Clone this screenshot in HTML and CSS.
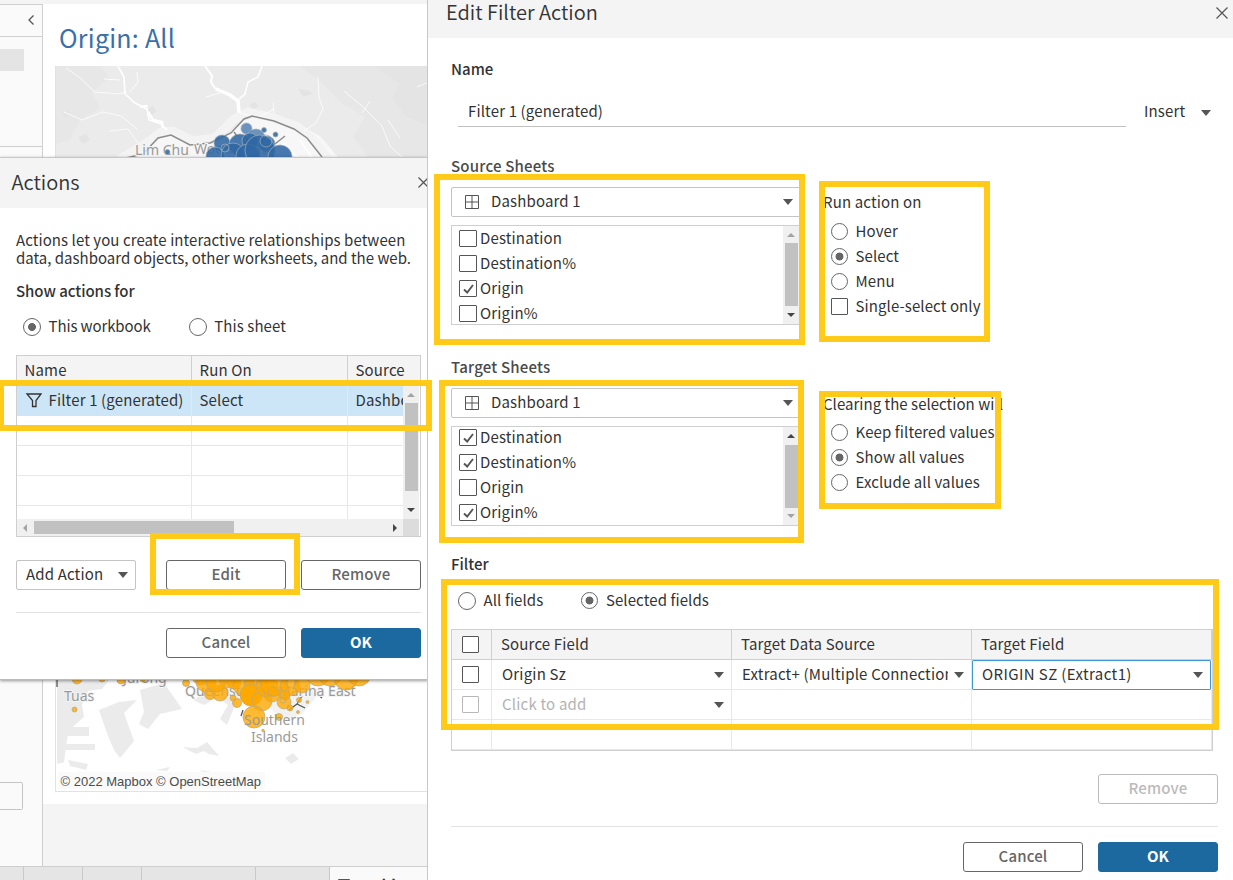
FILE: index.html
```html
<!DOCTYPE html>
<html lang="en">
<head>
<meta charset="utf-8">
<title>Edit Filter Action</title>
<link rel="stylesheet" href="styles.css">
</head>
<body>
<div class="desktop">
  <div class="workbook">
    <div class="topstrip"></div>
    <div class="work">
      <aside class="side">
        <div class="side-head"><svg width="8" height="12" viewBox="0 0 8 12"><path d="M6.500 1.500 2 6l4.500 4.500" fill="none" stroke="#555" stroke-width="1.300"/></svg></div>
        <div class="side-top"><div class="side-chip"></div></div>
        <div class="side-rest"><div class="side-field"></div></div>
      </aside>
      <main class="canvas">
        <div class="sheet">
          <h1 class="sheet-title">Origin: All</h1>
          <svg class="map" width="373" height="726" viewBox="55 66 373 726">
            <rect x="55" y="66" width="373" height="726" fill="#fff"/>
            <rect x="55" y="66" width="373" height="140" fill="#ebebeb"/>
            <g fill="#e4e4e4">
              <path d="M55 66h45l10 12-18 14 8 16-20 12-10 20-15 4z" opacity=".6"/>
              <path d="M300 66h128v91h-60l-15-20 12-20-25-15-22-22z" opacity=".6"/>
              <path d="M375 66h53v60l-22-10-14-18 8-14z"/>
              <path d="M298 89l10 1 5 4-10 3zM62 113l6-3 3 4-6 3zM148 109l5-3 3 5-4 4zM78 137l8-3 4 6-7 4zM250 104l6-2 2 5-7 2z"/>
            </g>
            <path d="M100 172l35-22 20-14 16-1 20 10 25-1 28-24 20-4 34 8 22 12 34 40z" fill="#f7f7f7"/>
            <path d="M120 159l28-17 13-10 12-1 20 10 22-3 18-18 15-8 26 6 24 9 16 14 14 18" fill="none" stroke="#f3f3f3" stroke-width="9"/>
            <g fill="none" stroke="#fff">
              <path d="M118 66l6 11 1 17 10 9 12 6 2 11 12 4 6 6" stroke-width="1.600"/>
              <path d="M140 107l8-1M148 112l5 8 9 2 1 6" stroke-width="2.500"/>
              <path d="M205 66l7 10-1 6 4 6 12 6 11 6 1 12" stroke-width="2"/>
              <path d="M216 89l14 6 8 6 1 12" stroke-width="3.500"/>
              <path d="M262 66l-4 11-10 5-3 12-6 5" stroke-width="1.500"/>
              <g stroke-opacity=".75"><path d="M66 68l13 9 16 15 24 2 8-2M64 112l18 8 21-8 18 4 16 13M109 131l19-2 10 14M104 79l16 1M137 72l1 10-8 10M220 93l-14 4M318 77l1 20 4 12-7 14-12 8M344 91l18 15 20 20 8 20 12 11M370 101l-8 12M388 120l12 18M417 87l12-5M240 113l18 5 16-9M273 103l1 10"/></g>
              <path d="M290 150l8 8M300 140l12 18M285 143l-8 9" stroke-width="2"/>
            </g>
            <path d="M126 158l17-4 15-16 13-3 19 10 20-2 21-10 13-14 8-3 22 5 20 8 13 9 15 19M275 144l10-8M234 132l3 4" fill="none" stroke="#8c8c8c" stroke-width="1.500"/>
            <g class="place"><text x="135" y="155">Lim Chu</text><text x="194" y="154">Woodlands</text></g>
            <g fill="#2f68a4" stroke="#a5adb5" stroke-width=".7" fill-opacity=".88">
              <circle cx="246.500" cy="128.500" r="5.500" fill-opacity=".7"/><circle cx="264" cy="130" r="2.500"/><circle cx="275.500" cy="134.500" r="2.500"/><circle cx="167.500" cy="152" r="2.500"/>
              <circle cx="256" cy="138" r="9" fill-opacity=".7"/><circle cx="222" cy="143" r="8"/><circle cx="240" cy="145" r="11"/><circle cx="250" cy="141" r="8"/><circle cx="267" cy="144" r="8"/><circle cx="215" cy="156" r="9"/><circle cx="233" cy="155" r="12"/><circle cx="248" cy="156" r="12"/><circle cx="260" cy="150" r="15"/><circle cx="280" cy="157" r="12"/><circle cx="225" cy="148" r="4" fill="none"/><circle cx="266" cy="141" r="6" fill="none"/>
            </g>
            <g fill="#ebebeb">
              <path d="M57 680h52l-7 9-14 2-6 14 2 12-15 13-2 10-3 22-7 2zM60 727h29v9H60zM60 744h35v6H60zM68 760l20 4-2 6-16-4z"/>
              <path d="M57 726h6v37h-6z"/>
              <path d="M99 710l20-8 18-2-13 13 10 28-14 17-6-8-6-14zM140 690l24-7 18 26-22 5-12 15-9-5 5-12z"/>
              <path d="M193 700l26-14 38 10 4 6-24-2-10 25-7-6 8-14-10-8-14 8z"/>
              <path d="M183 747l14 1 10-6 12 14-10-2-5-3-8 3-8-4zM285 758l8-5 6 6-8 5zM301 754v5M155 770l15-3-3 4zM200 770l12 2h-9z"/>
              <path d="M250 688l45-2 28 3-20 24-15 8-14-9z" fill="#f2f2f2"/>
            </g>
            <path d="M57 680v7M289 710l8-6m0 0 8 4m-8-4 5-8M318 695l4 3M243 710l-2 6" fill="none" stroke="#555" stroke-width="1.300"/>
            <g class="place"><text x="64" y="701">Tuas</text><text x="123" y="683">Jurong</text><text x="185" y="696">Queenstown</text><text x="278" y="696">Marina East</text></g>
            <g fill="#ffa800" stroke="#b8a77c" stroke-width=".7" fill-opacity=".8">
              <circle cx="74.500" cy="709.500" r="2.500"/><circle cx="77" cy="679" r="5"/><circle cx="102" cy="679" r="3"/><circle cx="121" cy="680" r="4"/><circle cx="143" cy="679" r="3"/>
              <circle cx="186" cy="683" r="3.500"/><circle cx="201" cy="676" r="9"/><circle cx="206" cy="682" r="10"/><circle cx="210" cy="694" r="5.500"/><circle cx="220" cy="693" r="8"/><circle cx="216" cy="682" r="10"/><circle cx="229" cy="678" r="10"/><circle cx="234" cy="682" r="7"/><circle cx="233" cy="698" r="3"/><circle cx="237" cy="703" r="4.500"/><circle cx="244" cy="685" r="11"/><circle cx="256" cy="684" r="12"/><circle cx="251" cy="695" r="11" fill-opacity="1"/><circle cx="262" cy="701" r="10"/><circle cx="267" cy="686" r="11"/><circle cx="254" cy="717" r="11"/><circle cx="272" cy="694" r="8"/><circle cx="274" cy="682" r="14"/><circle cx="284" cy="702" r="7"/><circle cx="290" cy="686" r="10"/><circle cx="290" cy="708" r="3"/><circle cx="299" cy="700" r="2.500"/><circle cx="302" cy="685" r="8"/><circle cx="307.500" cy="702" r="1.500"/><circle cx="298" cy="712" r="1.500"/><circle cx="279" cy="717" r="3.500"/><circle cx="263" cy="730.500" r="1.300"/>
              <circle cx="318" cy="674" r="12"/><circle cx="330" cy="674" r="12"/><circle cx="346" cy="678" r="12"/><circle cx="359" cy="674" r="12"/>
              <circle cx="273" cy="692" r="5" fill="none"/><circle cx="285" cy="695" r="5"/><circle cx="291" cy="683" r="5" fill="none"/><circle cx="283" cy="700" r="3" fill="none"/>
            </g>
            <g class="place bare"><text x="244" y="725">Southern</text><text x="251" y="742">Islands</text></g>
            <rect x="58" y="772" width="207" height="17" fill="#fafafa"/>
            <text class="credit" x="60.500" y="786">© 2022 Mapbox © OpenStreetMap</text>
            <path d="M55.500 66v725.500H428" fill="none" stroke="#e2e2e2"/>
          </svg>
        </div>
      </main>
    </div>
    <div class="tabs"><i class="tab t1"></i><i class="tab t2"></i><i class="tab t3"></i><i class="tab t4"></i><i class="tab t5"></i><div class="tab-active"><svg width="12" height="10" viewBox="0 0 12 10"><path d="M.5.5h11v9H.500zM6 0v10M0 5h12" fill="none" stroke="#555"/></svg>Dashboard 1</div></div>
  </div>

  <section class="dialog actions">
    <header class="a-head"><h2 class="a-title">Actions</h2><svg class="x" width="11" height="11" viewBox="0 0 11 11"><path d="M.5.5l10 10M10.500.500l-10 10" stroke="#555" stroke-width="1.200"/></svg></header>
    <div class="a-body">
      <p class="intro">Actions let you create interactive relationships between<br><span class="in2">data, dashboard objects, other worksheets, and the web.</span></p>
      <div class="strong show-for">Show actions for</div>
      <div class="a-radios"><span class="opt wb"><i class="radio big on"></i>This workbook</span><span class="opt"><i class="radio big"></i>This sheet</span></div>
      <div class="a-table">
        <div class="a-row a-th"><span>Name</span><span>Run On</span><span>Source</span></div>
        <div class="a-main">
          <div class="a-rows">
            <div class="a-row sel"><span class="fname"><svg width="17" height="15" viewBox="0 0 17 15"><path d="M2 1h14L11 7.500v6H7.500v-6z" fill="none" stroke="#333" stroke-width="1.300"/></svg>Filter 1 (generated)</span><span>Select</span><span>Dashboard</span></div>
            <div class="a-row"><span></span><span></span><span></span></div>
            <div class="a-row"><span></span><span></span><span></span></div>
            <div class="a-row"><span></span><span></span><span></span></div>
            <div class="a-row"><span></span><span></span><span></span></div>
          </div>
          <div class="vbar av"><i class="up dim"></i><i class="thumb"></i><i class="down"></i></div>
        </div>
        <div class="a-foot"><div class="hbar"><i class="left dim"></i><i class="hthumb"></i><i class="right"></i></div><i class="corner"></i></div>
      </div>
      <div class="a-buttons"><div class="btn add">Add Action<i class="caret"></i></div><div class="btn edit">Edit</div><div class="btn">Remove</div></div>
      <div class="a-final"><div class="btn">Cancel</div><div class="btn primary">OK</div></div>
    </div>
  </section>

  <section class="dialog editor">
    <header class="e-head"><h2 class="e-title">Edit Filter Action</h2><svg class="x" width="12" height="12" viewBox="0 0 12 12"><path d="M.5.5l11 11M11.500.500l-11 11" stroke="#555" stroke-width="1.200"/></svg></header>
    <div class="e-body">
      <div class="strong name-label">Name</div>
      <div class="name-row"><div class="name-input">Filter 1 (generated)</div><div class="insert">Insert<i class="caret"></i></div></div>
      <div class="pair">
        <div class="sheets">
          <div class="semi">Source Sheets</div>
          <div class="select"><svg width="14" height="14" viewBox="0 0 14 14"><path d="M.5.5h13v13H.500zM7 0v14M0 7h14" fill="none" stroke="#555"/></svg><span>Dashboard 1</span><i class="caret"></i></div>
          <div class="list">
            <div class="items">
              <div class="item"><i class="check"></i>Destination</div>
              <div class="item"><i class="check"></i>Destination%</div>
              <div class="item"><i class="check"><svg width="16" height="15" viewBox="0 0 16 15"><path d="M4 8.500l3.200 3L13 4" fill="none" stroke="#555" stroke-width="1.900"/></svg></i>Origin</div>
              <div class="item"><i class="check"></i>Origin%</div>
            </div>
            <div class="vbar"><i class="up dim"></i><i class="thumb"></i><i class="down"></i></div>
          </div>
        </div>
        <div class="options">
          <div class="cap run">Run action on</div>
          <div class="opt"><i class="radio"></i>Hover</div>
          <div class="opt"><i class="radio on"></i>Select</div>
          <div class="opt"><i class="radio"></i>Menu</div>
          <div class="opt"><i class="box"></i>Single-select only</div>
        </div>
      </div>
      <div class="pair second">
        <div class="sheets">
          <div class="semi">Target Sheets</div>
          <div class="select"><svg width="14" height="14" viewBox="0 0 14 14"><path d="M.5.5h13v13H.500zM7 0v14M0 7h14" fill="none" stroke="#555"/></svg><span>Dashboard 1</span><i class="caret"></i></div>
          <div class="list scrolled">
            <div class="items">
              <div class="item"><i class="check"><svg width="16" height="15" viewBox="0 0 16 15"><path d="M4 8.500l3.200 3L13 4" fill="none" stroke="#555" stroke-width="1.900"/></svg></i>Destination</div>
              <div class="item"><i class="check"><svg width="16" height="15" viewBox="0 0 16 15"><path d="M4 8.500l3.200 3L13 4" fill="none" stroke="#555" stroke-width="1.900"/></svg></i>Destination%</div>
              <div class="item"><i class="check"></i>Origin</div>
              <div class="item"><i class="check"><svg width="16" height="15" viewBox="0 0 16 15"><path d="M4 8.500l3.200 3L13 4" fill="none" stroke="#555" stroke-width="1.900"/></svg></i>Origin%</div>
            </div>
            <div class="vbar"><i class="up"></i><i class="thumb"></i><i class="down dim"></i></div>
          </div>
        </div>
        <div class="options">
          <div class="cap clearing">Clearing the selection will</div>
          <div class="opt"><i class="radio"></i>Keep filtered values</div>
          <div class="opt"><i class="radio on"></i>Show all values</div>
          <div class="opt"><i class="radio"></i>Exclude all values</div>
        </div>
      </div>
      <div class="strong filter-label">Filter</div>
      <div class="f-radios"><span class="opt"><i class="radio big"></i>All fields</span><span class="opt"><i class="radio on"></i>Selected fields</span></div>
      <div class="grid">
        <div class="g-row g-head"><span><i class="box"></i></span><span>Source Field</span><span>Target Data Source</span><span>Target Field</span></div>
        <div class="g-row"><span><i class="box"></i></span><span class="drop"><b>Origin Sz</b><i class="caret"></i></span><span class="drop tight"><b>Extract+ (Multiple Connections)</b><i class="caret"></i></span><span class="drop focus"><b>ORIGIN SZ (Extract1)</b><i class="caret"></i></span></div>
        <div class="g-row"><span><i class="box faint"></i></span><span class="drop muted"><b>Click to add</b><i class="caret"></i></span><span></span><span></span></div>
        <div class="g-row"><span></span><span></span><span></span><span></span></div>
      </div>
      <div class="e-remove"><div class="btn off">Remove</div></div>
      <div class="e-final"><div class="btn">Cancel</div><div class="btn primary">OK</div></div>
    </div>
  </section>

  <div class="mark m-row"></div>
  <div class="mark m-edit"></div>
  <div class="mark m-source"></div>
  <div class="mark m-target"></div>
  <div class="mark m-run"></div>
  <div class="mark m-clear"></div>
  <div class="mark m-filter"></div>
</div>
</body>
</html>
```
FILE: styles.css
```css
* { box-sizing: border-box; }
body { margin: 0; font-family: "Noto Sans CJK SC", "Noto Sans", sans-serif; font-size: 15px; line-height: 20px; color: #333; letter-spacing: .15px; }
h1, h2, p { margin: 0; font-weight: 400; }
i { font-style: normal; display: block; flex: none; }
b { font-weight: 400; }
svg { display: block; flex: none; }
.desktop { position: relative; width: 1233px; height: 880px; overflow: hidden; background: #fff; }

/* workbook behind the dialogs */
.workbook { width: 428px; height: 880px; display: flex; flex-direction: column; overflow: hidden; }
.topstrip { height: 4px; background: #f4f4f4; flex: none; }
.work { display: flex; height: 862px; flex: none; }
.side { width: 43px; border-right: 1px solid #cfcfcf; border-top: 1px solid #cfcfcf; background: #fafafa; flex: none; }
.side-head { height: 32px; border-bottom: 1px solid #cfcfcf; padding: 9px 7px; display: flex; justify-content: flex-end; }
.side-top { height: 110px; border-bottom: 1px solid #cfcfcf; padding-top: 12px; }
.side-chip { width: 24px; height: 22px; background: #e4e4e4; }
.side-rest { padding-top: 635px; }
.side-field { width: 23px; height: 28px; border: 1px solid #c4c4c4; border-left: 0; border-radius: 0 2px 2px 0; }
.canvas { flex: 1; background: #f4f4f4; }
.sheet { height: 800px; background: #fff; padding-left: 12px; }
.sheet-title { height: 62px; padding: 16px 0 0 4px; font-size: 25px; line-height: 34px; color: #3a6fa9; letter-spacing: .25px; }
.place { font: 14px "Noto Sans", sans-serif; fill: #9a9a9a; stroke: #f4f4f4; stroke-width: 2px; paint-order: stroke; letter-spacing: 0; }
.bare { stroke: none; }
.credit { font: 13px "Liberation Sans", sans-serif; fill: #4c4c4c; letter-spacing: 0; }
.tabs { height: 14px; display: flex; background: #e5e5e5; border-top: 1px solid #cfcfcf; }
.tab { border-right: 1px solid #c8c8c8; }
.t1 { width: 24px; } .t2, .t3 { width: 59px; } .t4 { width: 114px; } .t5 { width: 74px; }
.tab-active { flex: 1; display: flex; align-items: flex-start; gap: 4px; background: #fafafa; padding: 12px 0 0 8px; font-weight: 700; line-height: 12px; height: 13px; overflow: hidden; }

/* shared controls */
.dialog { position: absolute; background: #fff; }
.strong { font-weight: 500; color: #333; letter-spacing: 0; }
.semi { font-weight: 500; color: #4a4a4a; letter-spacing: .2px; }
.opt { display: flex; align-items: center; gap: 7.500px; height: 25px; padding-bottom: 2px; white-space: nowrap; letter-spacing: .1px; }
.wb { letter-spacing: -.1px; }
.radio { width: 17px; height: 17px; border: 1px solid #666; border-radius: 50%; background: #fff; margin-top: 2px; }
.radio.big { width: 18px; height: 18px; }
.radio.on { background: radial-gradient(circle, #666 0 3.600px, #fff 4.300px); }
.box { width: 17px; height: 17px; border: 1px solid #555; border-radius: 1px; background: #fff; }
.opt .box { margin-top: 2px; }
.caret { width: 0; height: 0; border: 5px solid transparent; border-top: 6px solid #555; border-bottom: 0; }
.btn { width: 120px; height: 30px; border: 1px solid #666; border-radius: 3px; background: #fff; color: #666; text-align: center; line-height: 26px; font-weight: 500; }
.primary { background: #1b699f; border-color: #1b699f; color: #fff; font-weight: 700; }
.off { border-color: #bbb; color: #bbb; }
.vbar { width: 16px; display: flex; flex-direction: column; align-items: center; background: #f0f0f0; flex: none; }
.up, .down { width: 0; height: 0; border: 4px solid transparent; }
.up { border-top: 0; border-bottom-color: #444; margin-top: 7px; }
.down { border-bottom: 0; border-top-color: #444; margin-top: 7px; }
.up.dim { border-bottom-color: #a3a3a3; }
.down.dim { border-top-color: #a3a3a3; }
.thumb { width: 13px; height: 63px; background: #c1c1c1; margin-top: 6px; }

/* actions window */
.actions { left: 0; top: 157px; width: 428px; height: 523px; border-top: 1px solid #c8c8c8; border-bottom: 1px solid #bbb; box-shadow: 0 1px 3px #0006; }
.a-head { height: 50px; background: #f4f4f4; display: flex; justify-content: space-between; align-items: center; padding: 0 0 2px 11.500px; }
.a-head .x { margin-right: -1px; }
.a-title, .e-title { font-size: 20px; line-height: 28px; letter-spacing: 0; font-weight: 350; }
.a-body { padding: 23px 7px 0 16px; }
.intro { line-height: 18px; white-space: nowrap; letter-spacing: .075px; }
.in2 { letter-spacing: 0; }
.show-for { margin-top: 14px; letter-spacing: -.05px; }
.a-radios { display: flex; gap: 38px; padding: 13px 0 0 7px; }
.a-table { margin-top: 16px; width: 405px; height: 182px; border: 1px solid #cfcfcf; }
.a-row { display: grid; grid-template-columns: 175px 156px 1fr; height: 30px; overflow: hidden; }
.a-row span { border-right: 1px solid #e8e8e8; border-bottom: 1px solid #e8e8e8; padding-left: 7.500px; line-height: 28px; white-space: nowrap; overflow: hidden; }
.a-row span:last-child { border-right: 0; }
.a-th { background: #f4f4f4; }
.a-th span { border-color: #cfcfcf; }
.sel { background: #cde6f7; }
.sel span { border-bottom: 0; }
.a-row .fname { display: flex; align-items: center; gap: 7px; padding-bottom: 2px; letter-spacing: .15px; }
.a-main { display: flex; height: 133px; }
.a-rows { width: 386px; overflow: hidden; }
.av .thumb { height: 88px; }
.av .down { margin-top: 17px; }
.a-foot { display: flex; height: 17px; }
.hbar { width: 386px; background: #f0f0f0; display: flex; align-items: center; }
.left, .right { border: 4px solid transparent; width: 0; height: 0; }
.left { border-left: 0; border-right-color: #a3a3a3; margin-left: 6px; }
.right { border-right: 0; border-left-color: #444; margin-left: 159px; }
.hthumb { width: 200px; height: 13px; background: #c1c1c1; margin-left: 7px; }
.corner { width: 16px; background: #dcdcdc; }
.a-buttons { display: flex; gap: 15px; padding-top: 23px; }
.add { border-color: #c4c4c4; color: #333; display: flex; justify-content: space-between; padding: 0 7px 0 9px; font-weight: 400; border-radius: 2px; margin-right: 15px; }
.add .caret { margin-top: 11px; }
.a-final { margin-top: 22px; border-top: 1px solid #e2e2e2; padding-top: 15px; display: flex; justify-content: flex-end; gap: 15px; }

/* filter action window */
.editor { left: 427px; top: 0; width: 806px; height: 880px; border-left: 1px solid #c8c8c8; }
.e-head { height: 38px; background: #f4f4f4; display: flex; justify-content: space-between; padding: 0 5px 0 18px; }
.e-head .x { margin-top: 7px; }
.e-title { margin-top: -2px; }
.e-body { padding: 21px 15px 0 23px; }
.name-row { display: flex; padding: 18px 0 0 7px; height: 48px; }
.name-input { width: 668px; height: 30px; border-bottom: 1px solid #c0c0c0; padding-left: 10px; line-height: 28px; }
.insert { display: flex; align-items: center; gap: 16px; padding: 0 0 2px 18px; height: 30px; }
.insert .caret { margin-top: 4px; }
.pair { display: flex; padding-top: 29px; height: 201px; }
.pair.second { height: 198px; }
.sheets { width: 350px; flex: none; }
.select { margin-top: 11px; height: 30px; border: 1px solid #c4c4c4; border-radius: 2px; display: flex; align-items: center; padding: 0 7px 0 13px; gap: 12px; }
.select span { margin-top: -2px; }
.select .caret { margin-left: auto; }
.list { margin-top: 8px; height: 100px; border: 1px solid #cfcfcf; display: flex; justify-content: space-between; padding-right: 1px; overflow: hidden; }
.items { padding-left: 7px; }
.item { height: 25px; display: flex; align-items: center; gap: 3px; padding-bottom: 2px; }
.check { width: 18px; height: 17px; border: 1px solid #555; border-radius: 1px; margin-top: 2px; }
.scrolled .items { margin-top: -2px; }
.scrolled .thumb { margin-top: 7px; }
.scrolled .down { margin-top: 6px; }
.options { padding: 36px 0 0 22px; }
.cap { margin-bottom: 7px; white-space: nowrap; }
.clearing { letter-spacing: .03px; padding-top: 1px; margin-bottom: 6px; }
.options .opt { padding-left: 8px; }
.filter-label { margin-top: 28px; }
.f-radios { display: flex; gap: 38px; padding: 14px 0 0 7px; }
.grid { margin-top: 16px; width: 762px; border: 1px solid #cfcfcf; }
.g-row { display: grid; grid-template-columns: 40px 240px 240px 240px; height: 30px; }
.g-row > span { border-right: 1px solid #e8e8e8; border-bottom: 1px solid #e8e8e8; padding-left: 9px; line-height: 28px; white-space: nowrap; min-width: 0; }
.g-row > span:first-child { display: flex; align-items: center; padding-left: 10px; }
.g-head > span { border-color: #cfcfcf; background: #f4f4f4; }
.g-row > .drop { display: flex; align-items: center; justify-content: space-between; padding: 0 7px 0 10px; }
.drop b { overflow: hidden; margin-top: -2px; letter-spacing: .2px; }
.g-row > .tight { gap: 6px; }
.g-row > .focus { border: 1px solid #3d97d6; border-radius: 1px; padding-left: 9px; margin-right: 1px; }
.focus b { letter-spacing: .4px; }
.muted { color: #b3b3b3; }
.faint { border-color: #b8b8b8; }
.e-remove { display: flex; justify-content: flex-end; padding-top: 23px; }
.e-final { margin-top: 22px; border-top: 1px solid #e2e2e2; padding-top: 15px; display: flex; justify-content: flex-end; gap: 15px; }

/* highlight frames laid over the windows */
.mark { position: absolute; border: 6px solid #ffca18; }
.m-row { left: -2px; top: 380px; width: 434px; height: 51px; }
.m-edit { left: 150px; top: 533px; width: 150px; height: 62px; }
.m-source { left: 434px; top: 174px; width: 371px; height: 171px; }
.m-target { left: 439px; top: 380px; width: 365px; height: 163px; }
.m-run { left: 819px; top: 181px; width: 171px; height: 161px; }
.m-clear { left: 819px; top: 391px; width: 182px; height: 118px; }
.m-filter { left: 441px; top: 579px; width: 778px; height: 151px; }
```
